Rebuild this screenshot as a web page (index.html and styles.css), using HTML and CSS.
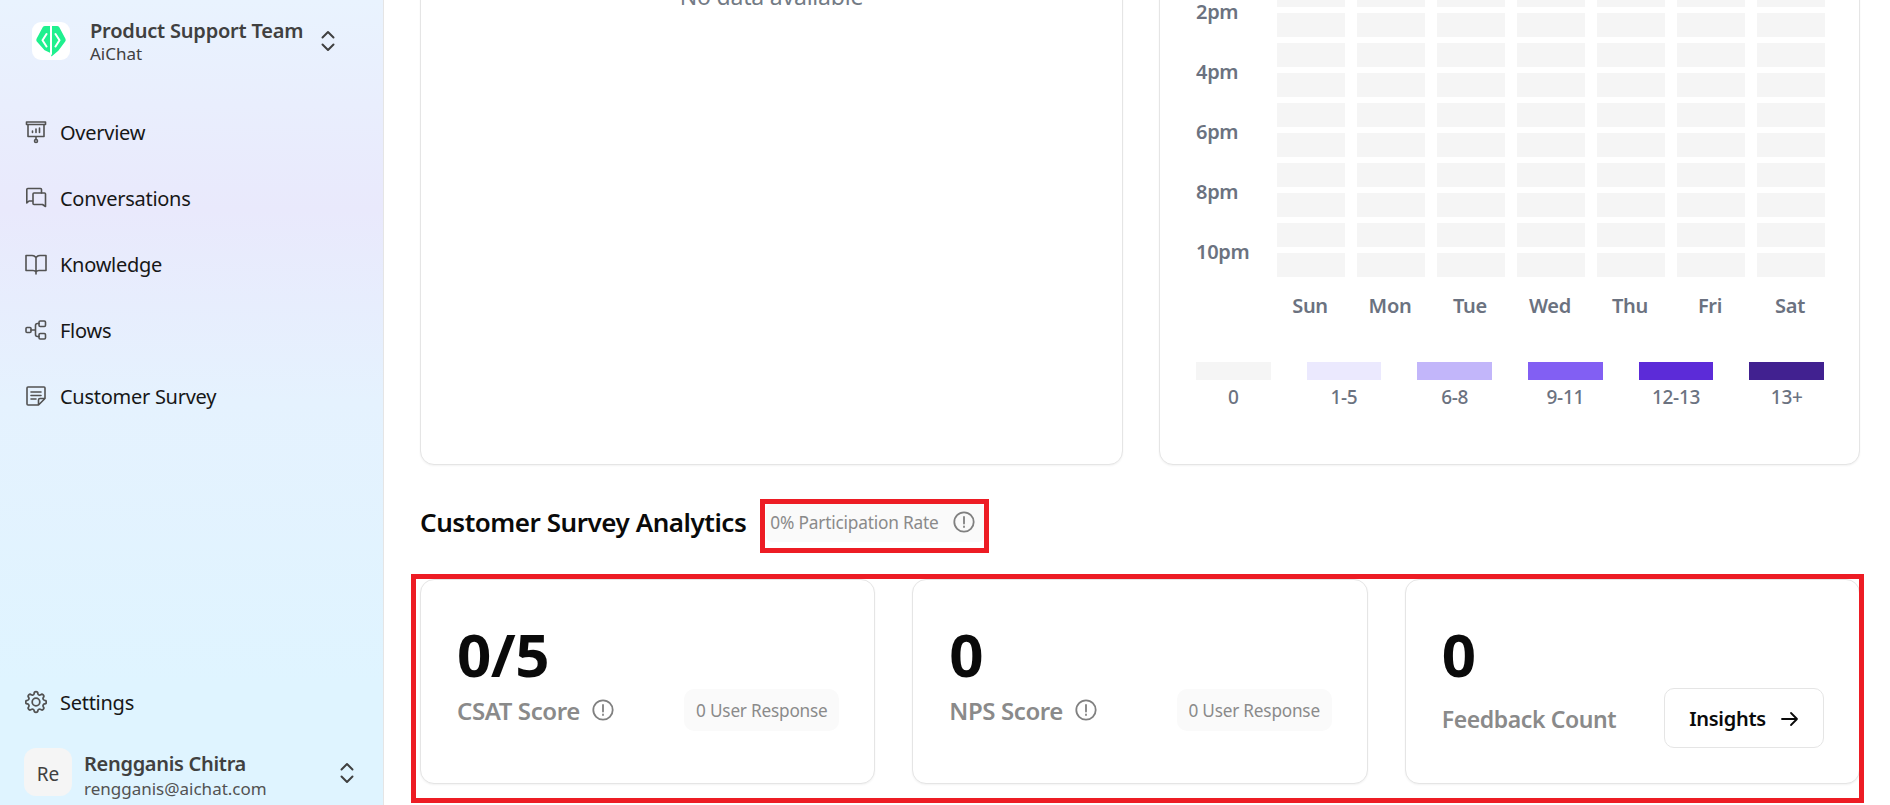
FILE: index.html
```html
<!DOCTYPE html>
<html lang="en">
<head>
<meta charset="utf-8">
<title>Analytics</title>
<link rel="stylesheet" href="styles.css">
</head>
<body>
<div class="app">
  <aside class="sidebar">
    <div class="team">
      <div class="logo">
        <svg width="30" height="32" viewBox="0 0 30 32"><path class="logo-hex" d="M9 1H21Q22.500 1 23.300 2.200L29.300 13.500Q30.200 15.200 29 16.800L22.500 25.500Q21.800 26.400 20.800 27L15.500 31.500 14.500 28 9.200 25.500Q8.200 25 7.500 24L1 16.800Q-.200 15.200.7 13.500L6.700 2.200Q7.500 1 9 1Z"/><path class="logo-cut" d="M15-1V29M10.500 9 6.500 15.300 10.500 21.500M19.500 9 23.500 15.300 19.500 21.500"/></svg>
      </div>
      <div class="team-text">
        <div class="team-name">Product Support Team</div>
        <div class="team-sub">AiChat</div>
      </div>
      <svg class="updown" width="16" height="22" viewBox="0 0 16 22"><path d="M2.500 7.500 8 2l5.500 5.500M2.500 14.500 8 20l5.500-5.500"/></svg>
    </div>
    <nav class="nav">
      <a class="nav-item">
        <svg class="nav-icon" viewBox="0 0 22 24"><path d="M1.500 2h19v2.500h-19zM3 4.500v12h16v-12M11 16.500v3"/><circle cx="11" cy="21" r="1.500"/><path d="M7.500 12.500v-1.500M11 12.500V9M14.500 12.500V8"/></svg>
        <span>Overview</span>
      </a>
      <a class="nav-item">
        <svg class="nav-icon" viewBox="0 0 22 24"><path d="M7.500 15H4L1.800 17V3.500Q1.800 2.500 2.800 2.500H15.500Q16.500 2.500 16.500 3.500V7"/><path d="M8 8Q8 7 9 7H19.500Q20.500 7 20.500 8V20.500L17.500 18.500H9Q8 18.500 8 17.500Z"/></svg>
        <span>Conversations</span>
      </a>
      <a class="nav-item">
        <svg class="nav-icon" viewBox="0 0 22 24"><path d="M11 5.500Q9.500 3.500 7 3.500H1v15h7q2 0 3 1.500 1-1.500 3-1.500h7v-15h-6q-2.500 0-4 2zM11 5.500V22"/></svg>
        <span>Knowledge</span>
      </a>
      <a class="nav-item">
        <svg class="nav-icon" viewBox="0 0 22 24"><rect x="1" y="9.500" width="5" height="5" rx="1"/><rect x="14" y="3" width="6.500" height="5.500" rx="1.200"/><rect x="14" y="15.500" width="6.500" height="5.500" rx="1.200"/><path d="M6 12h4.500M14 5.500h-1.500q-2 0-2 2v9q0 2 2 2H14"/></svg>
        <span>Flows</span>
      </a>
      <a class="nav-item">
        <svg class="nav-icon" viewBox="0 0 22 24"><path d="M13.500 21H3q-1 0-1-1V4q0-1 1-1h16q1 0 1 1v10.500zM13.500 21v-5q0-1.500 1.500-1.500h5M6 8h10M6 11.500h10M6 15h5"/></svg>
        <span>Customer Survey</span>
      </a>
    </nav>
    <div class="sidebar-foot">
      <a class="nav-item">
        <svg class="nav-icon" viewBox="2 0 20 22"><path d="M10.300 3.300a1.700 1.700 0 0 1 3.400 0 1.700 1.700 0 0 0 2.600 1.100 1.700 1.700 0 0 1 2.400 2.400 1.700 1.700 0 0 0 1.100 2.600 1.700 1.700 0 0 1 0 3.400 1.700 1.700 0 0 0-1.100 2.600 1.700 1.700 0 0 1-2.400 2.400 1.700 1.700 0 0 0-2.600 1.100 1.700 1.700 0 0 1-3.400 0 1.700 1.700 0 0 0-2.600-1.100 1.700 1.700 0 0 1-2.400-2.400 1.700 1.700 0 0 0-1.100-2.600 1.700 1.700 0 0 1 0-3.400 1.700 1.700 0 0 0 1.100-2.600 1.700 1.700 0 0 1 2.400-2.400 1.700 1.700 0 0 0 2.600-1.100z"/><circle cx="12" cy="11" r="3.500"/></svg>
        <span>Settings</span>
      </a>
      <div class="user">
        <div class="avatar">Re</div>
        <div class="user-text">
          <div class="user-name">Rengganis Chitra</div>
          <div class="user-mail">rengganis@aichat.com</div>
        </div>
        <svg class="updown user-updown" width="16" height="22" viewBox="0 0 16 22"><path d="M2.500 7.500 8 2l5.500 5.500M2.500 14.500 8 20l5.500-5.500"/></svg>
      </div>
    </div>
  </aside>

  <main class="main">
    <section class="top-row">
      <div class="card chart-card"><div class="no-data">No data available</div></div>
      <div class="card heat-card">
        <div class="heat">
          <div class="hours">
            <div>2pm</div><div>4pm</div><div>6pm</div><div>8pm</div><div>10pm</div>
          </div>
          <div class="cells">
            <i></i><i></i><i></i><i></i><i></i><i></i><i></i>
            <i></i><i></i><i></i><i></i><i></i><i></i><i></i>
            <i></i><i></i><i></i><i></i><i></i><i></i><i></i>
            <i></i><i></i><i></i><i></i><i></i><i></i><i></i>
            <i></i><i></i><i></i><i></i><i></i><i></i><i></i>
            <i></i><i></i><i></i><i></i><i></i><i></i><i></i>
            <i></i><i></i><i></i><i></i><i></i><i></i><i></i>
            <i></i><i></i><i></i><i></i><i></i><i></i><i></i>
            <i></i><i></i><i></i><i></i><i></i><i></i><i></i>
            <i></i><i></i><i></i><i></i><i></i><i></i><i></i>
          </div>
        </div>
        <div class="days"><span>Sun</span><span>Mon</span><span>Tue</span><span>Wed</span><span>Thu</span><span>Fri</span><span>Sat</span></div>
        <div class="legend">
          <div class="legend-item"><b class="c0"></b><span>0</span></div>
          <div class="legend-item"><b class="c1"></b><span>1-5</span></div>
          <div class="legend-item"><b class="c2"></b><span>6-8</span></div>
          <div class="legend-item"><b class="c3"></b><span>9-11</span></div>
          <div class="legend-item"><b class="c4"></b><span>12-13</span></div>
          <div class="legend-item"><b class="c5"></b><span>13+</span></div>
        </div>
      </div>
    </section>

    <section class="survey">
      <div class="survey-head">
        <h2>Customer Survey Analytics</h2>
        <div class="rate marked">
          <span>0% Participation Rate</span>
          <svg class="info" viewBox="0 0 22 22"><circle cx="11" cy="11" r="9.700"/><path d="M11 6v6.500M11 15.500v.6"/></svg>
        </div>
      </div>
      <div class="stats marked-wide">
        <div class="card stat">
          <div class="value">0/5</div>
          <div class="stat-row">
            <div class="stat-label">CSAT Score <svg class="info" viewBox="0 0 22 22"><circle cx="11" cy="11" r="9.700"/><path d="M11 6v6.500M11 15.500v.6"/></svg></div>
            <div class="resp">0 User Response</div>
          </div>
        </div>
        <div class="card stat">
          <div class="value">0</div>
          <div class="stat-row">
            <div class="stat-label">NPS Score <svg class="info" viewBox="0 0 22 22"><circle cx="11" cy="11" r="9.700"/><path d="M11 6v6.500M11 15.500v.6"/></svg></div>
            <div class="resp">0 User Response</div>
          </div>
        </div>
        <div class="card stat">
          <div class="value">0</div>
          <div class="stat-row feedback">
            <div class="stat-label">Feedback Count</div>
            <button class="insights">Insights <svg width="18" height="16" viewBox="0 0 18 16"><path d="M1 8h15M10 2l6 6-6 6"/></svg></button>
          </div>
        </div>
      </div>
    </section>
  </main>
</div>
</body>
</html>
```
FILE: styles.css
```css
* { box-sizing: border-box; }
html, body { margin: 0; height: 100%; overflow: hidden; }
body { font-family: "Noto Sans", "Open Sans", sans-serif; background: #fff; color: #0a0a0a; }
.app { display: flex; height: 805px; }

.sidebar {
  width: 384px; flex: none; display: flex; flex-direction: column;
  border-right: 1px solid #e5e5e5;
  background: linear-gradient(180deg, #e9f3fe 0%, #e9e9fc 26%, #e5f2fe 50%, #dff4ff 85%, #dff4ff 100%);
  padding: 22px 0 9px;
}
.team { display: flex; align-items: center; padding-left: 32px; height: 38px; }
.logo { width: 38px; height: 38px; border-radius: 9px; background: #fff; display: flex; align-items: center; justify-content: center; flex: none; }
.logo-hex { fill: #1ff08e; }
.logo-cut { fill: none; stroke: #fff; stroke-width: 2; stroke-linecap: round; stroke-linejoin: round; }
.team-text { margin-left: 20px; width: 230px; }
.team-name { font-size: 20px; font-weight: 600; color: #404040; line-height: 26px; white-space: nowrap; letter-spacing: -.2px; }
.team-sub { font-size: 17px; color: #404040; line-height: 20px; }
.updown { flex: none; fill: none; stroke: #404040; stroke-width: 2; stroke-linecap: round; stroke-linejoin: round; }
.user-updown { margin-top: 2px; }
.nav { display: flex; flex-direction: column; margin-top: 39px; }
.nav-item { display: flex; align-items: center; height: 66px; padding-left: 25px; font-size: 20px; color: #171717; letter-spacing: -.27px; }
.nav-icon { width: 22px; height: 24px; margin-right: 13px; flex: none; fill: none; stroke: #525252; stroke-width: 1.600; stroke-linecap: round; stroke-linejoin: round; }
.sidebar-foot { margin-top: auto; }
.user { display: flex; align-items: center; height: 48px; padding-left: 24px; margin-top: 13px; }
.avatar { width: 48px; height: 48px; padding-top: 3px; border-radius: 12px; background: #f5f5f5; display: flex; align-items: center; justify-content: center; font-size: 19px; color: #404040; flex: none; }
.user-text { margin-left: 12px; width: 255px; padding-top: 6px; }
.user-name { font-size: 20px; font-weight: 600; color: #404040; line-height: 26px; letter-spacing: -.3px; white-space: nowrap; }
.user-mail { font-size: 17px; color: #525252; line-height: 23px; white-space: nowrap; }

.main { flex: 1; min-width: 0; height: 805px; overflow: hidden; display: flex; flex-direction: column; justify-content: flex-end; padding: 0 30px 21px 36px; }
.card { background: #fff; border: 1px solid #e5e5e5; border-radius: 14px; box-shadow: 0 1px 2px rgba(0,0,0,.05); }
.top-row { display: grid; grid-template-columns: 703px 701px; column-gap: 36px; flex: none; }
.chart-card { text-align: center; padding-top: 37px; height: 520px; }
.no-data { font-size: 23px; color: #737b85; line-height: 26px; letter-spacing: -.2px; }
.heat-card { padding: 0 35px 54px 36px; display: flex; flex-direction: column; justify-content: flex-end; height: 520px; }
.heat { display: flex; }
.hours { width: 81px; flex: none; font-size: 20px; font-weight: 600; color: #6b7280; letter-spacing: -.3px; }
.hours div { height: 60px; padding-bottom: 4px; display: flex; align-items: center; white-space: nowrap; }
.cells { display: grid; grid-template-columns: repeat(7, 68px); gap: 6px 12px; grid-auto-rows: 24px; flex: none; }
.cells i { display: block; background: #f5f5f5; }
.days { display: grid; grid-template-columns: repeat(7, 80px); margin-left: 74px; margin-top: 10px; font-size: 20px; font-weight: 600; color: #6b7280; text-align: center; line-height: 26px; letter-spacing: -.3px; }
.legend { display: flex; justify-content: space-between; margin-top: 43px; }
.legend-item { width: 74.5px; text-align: center; font-size: 19px; font-weight: 500; color: #6b7280; line-height: 26px; white-space: nowrap; letter-spacing: -.3px; }
.legend-item b { display: block; height: 18px; margin-bottom: 4px; }
.c0 { background: #f5f5f5; }
.c1 { background: #ebe9fe; }
.c2 { background: #c2b6fa; }
.c3 { background: #825ff3; }
.c4 { background: #5c2bd8; }
.c5 { background: #412190; }

.survey { flex: none; }
.survey-head { display: flex; align-items: center; margin-top: 36px; height: 44px; }
h2 { margin: 0; padding-bottom: 2px; font-size: 26px; font-weight: 600; color: #0a0a0a; letter-spacing: -.45px; line-height: 36px; white-space: nowrap; }
.rate { position: relative; margin-left: 20px; display: flex; align-items: center; justify-content: space-between; width: 218px; height: 38px; padding: 0 9px 2px 4px; background: #fafafa; border-radius: 6px; font-size: 17.3px; color: #8a8a8a; white-space: nowrap; letter-spacing: -.2px; }
.marked::after { content: ""; position: absolute; inset: -5px -5px -11px -6px; border: 5px solid #ed1c24; pointer-events: none; }
.info { width: 22px; height: 22px; flex: none; fill: none; stroke: #808080; stroke-width: 1.800; stroke-linecap: round; }
.stats { position: relative; display: grid; grid-template-columns: repeat(3, 1fr); column-gap: 37px; height: 205px; margin-top: 34px; }
.marked-wide::after { content: ""; position: absolute; inset: -5px -4px -19px -9px; border: 5px solid #ed1c24; pointer-events: none; }
.stat { padding: 36px 36px 0; }
.value { font-size: 60px; font-weight: 700; line-height: 76px; color: #0a0a0a; letter-spacing: -.5px; }
.stat-row { display: flex; align-items: center; justify-content: space-between; height: 42px; margin-top: -3px; }
.stat-label { display: flex; align-items: center; gap: 12px; font-size: 24px; font-weight: 600; color: #8a8a8a; letter-spacing: -.4px; white-space: nowrap; }
.resp { height: 42px; width: 155px; margin-right: -1px; display: flex; align-items: center; justify-content: center; background: #fafafa; border-radius: 10px; font-size: 17.2px; color: #8a8a8a; white-space: nowrap; letter-spacing: -.2px; }
.feedback { height: 60px; margin-top: -4px; margin-right: -1px; }
.feedback .stat-label { font-size: 23px; padding-top: 2px; }
.insights { width: 160px; height: 60px; border: 1px solid #e5e5e5; border-radius: 10px; background: #fff; display: flex; align-items: center; justify-content: center; gap: 15px; font: 600 20px "Noto Sans", sans-serif; color: #0a0a0a; letter-spacing: -.3px; padding: 1px 0 0; }
.insights svg { fill: none; stroke: #0a0a0a; stroke-width: 1.800; stroke-linecap: round; stroke-linejoin: round; }
```
